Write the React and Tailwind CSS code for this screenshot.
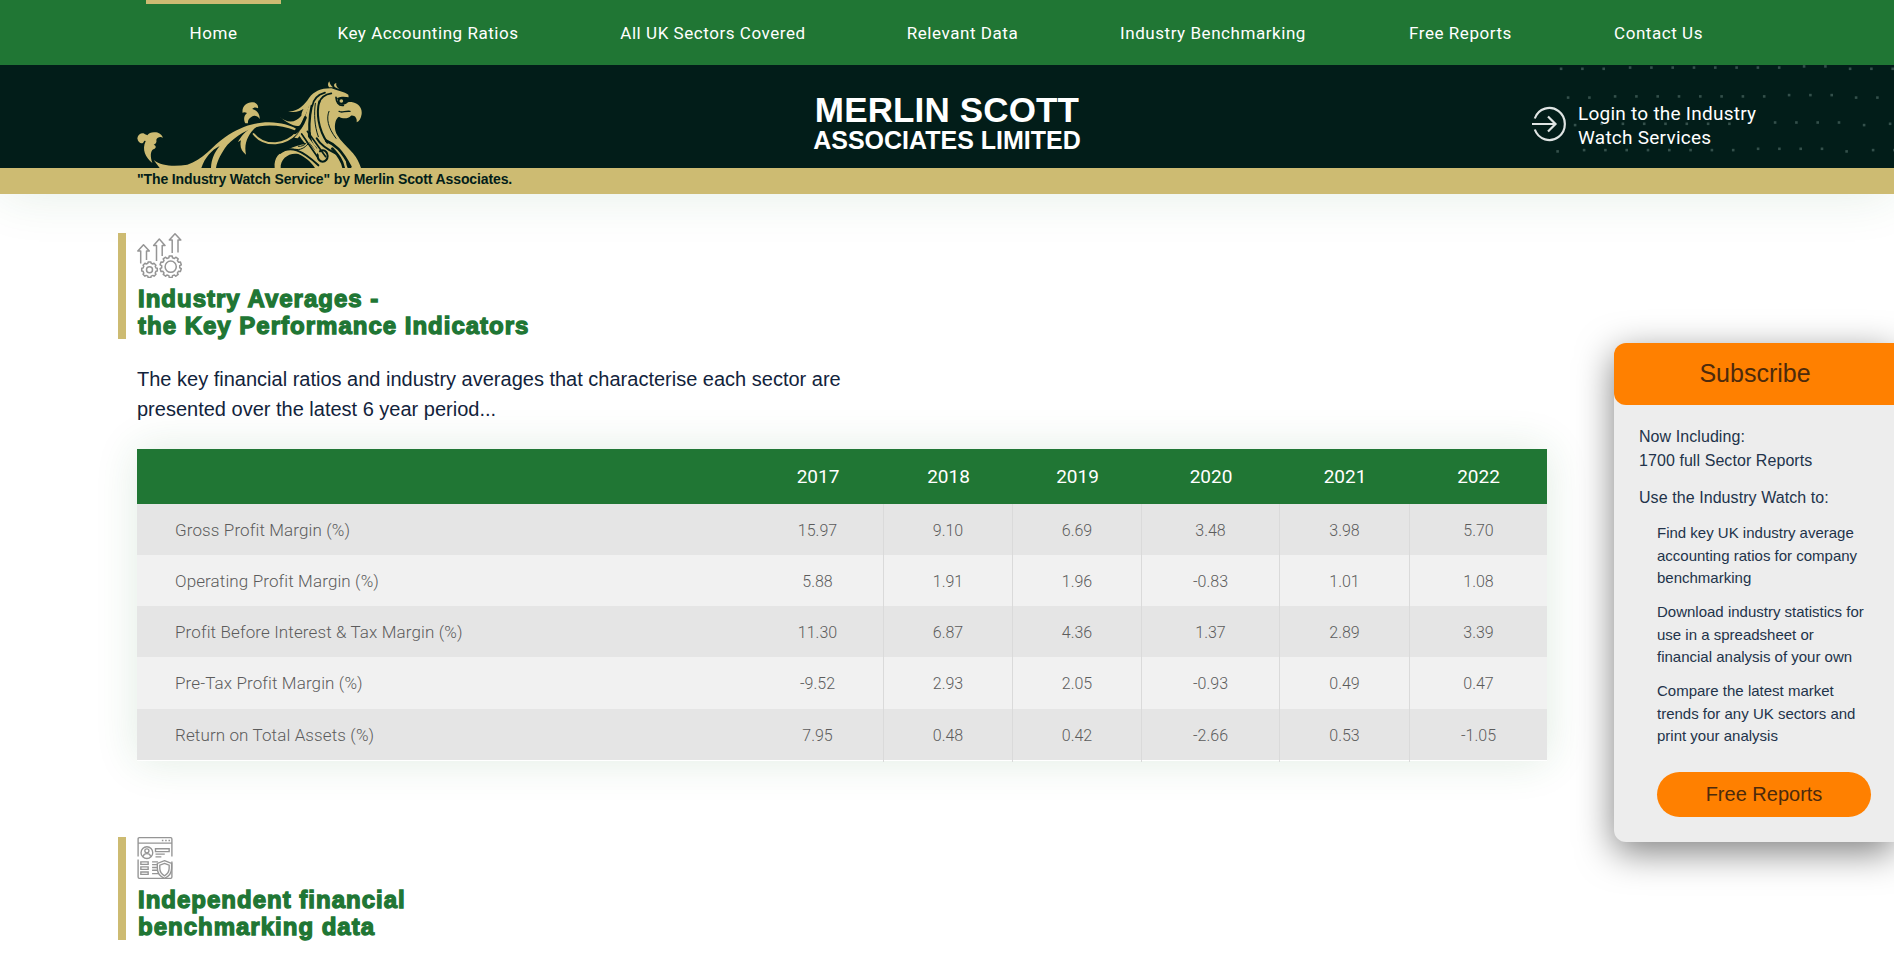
const NAV = [
  { label: "Home", cls: "w-[135px] border-t-4 border-[#cdbb72] leading-[58px]" },
  { label: "Key Accounting Ratios", cls: "w-[272px] leading-[66px]" },
  { label: "All UK Sectors Covered", cls: "w-[276px] leading-[66px]" },
  { label: "Relevant Data", cls: "w-[201px] leading-[66px]" },
  { label: "Industry Benchmarking", cls: "w-[278px] leading-[66px]" },
  { label: "Free Reports", cls: "w-[195px] leading-[66px]" },
  { label: "Contact Us", cls: "w-[179px] leading-[66px]" },
];

const YEARS = ["2017", "2018", "2019", "2020", "2021", "2022"];
const ROWS = [
  ["Gross Profit Margin (%)", "15.97", "9.10", "6.69", "3.48", "3.98", "5.70"],
  ["Operating Profit Margin (%)", "5.88", "1.91", "1.96", "-0.83", "1.01", "1.08"],
  ["Profit Before Interest & Tax Margin (%)", "11.30", "6.87", "4.36", "1.37", "2.89", "3.39"],
  ["Pre-Tax Profit Margin (%)", "-9.52", "2.93", "2.05", "-0.93", "0.49", "0.47"],
  ["Return on Total Assets (%)", "7.95", "0.48", "0.42", "-2.66", "0.53", "-1.05"],
];
const COLS = "grid grid-cols-[615px_132px_129px_129px_138px_130px_137px]";
const ROW_H = ["h-[51px]", "h-[51px]", "h-[51px]", "h-[52px]", "h-[51px]"];

const run = (x0, n, y) => Array.from({ length: n }, (_, i) => [x0 + i * 21.3, y]);
const DOTS = [
  ...run(17, 3, 3.7), ...run(86, 8, 2.5), ...run(260, 2, 1.3), ...run(306, 3, 3.7),
  ...run(24, 2, 32.5), ...run(71, 8, 31.3), ...run(245, 3, 30), ...run(312, 2, 32.5),
  ...run(31, 1, 60), ...run(57.5, 7, 58.7), ...run(231, 4, 57.4), ...run(320, 1, 60), ...run(346, 1, 58.7),
  ...run(13.5, 1, 86.3), ...run(40, 8, 85), ...run(214, 4, 83.7), ...run(302.5, 1, 86.3), ...run(329, 2, 85),
];

function Griffin() {
  return (
    <svg className="block h-[98px] w-[250px]" viewBox="0 0 750 294">
      <g fill="#cdbb72">
        <path d="M82 279C61 262 50 238 62 214C62 211 57 212 56 216C53 224 39 220 37 205C39 192 50 188 58 191C61 193 63 193 67 196C71 190 80 186 90 187C100 187 108 191 114 203C105 199 97 202 94 209C96 216 92 222 86 224C95 228 94 234 85 238C76 243 75 260 82 279Z" />
        <path d="M86 270C110 289 150 290 187 284C232 272 262 228 300 202C340 174 382 157 432 157C470 158 495 166 513 176L509 181C480 169 440 163 405 169C365 176 320 206 300 234C284 258 276 276 273 294L258 294C259 268 268 248 284 228C260 240 240 262 229 294L104 294Z" />
        <path d="M361 160C354 145 358 136 366 129C360 126 355 126 353 129C349 109 366 95 384 97C396 98 401 108 399 115C392 111 386 112 382 117C396 121 405 133 404 147C398 138 388 135 380 140C371 145 368 152 369 160Z" />
        <path d="M384 170C358 184 346 202 339 216L348 211C343 230 350 245 363 254C359 235 361 216 370 200C376 188 384 180 394 170Z" />
        <path d="M460 137C484 159 510 161 529 137C529 118 552 94 560 88C550 114 518 134 487 123C516 128 538 106 552 84C568 63 590 54 620 55C634 62 660 66 670 74L671 82C662 80 650 78 636 84L642 100C648 106 662 106 669 97C676 95 684 97 688 98C704 102 712 118 710 132C708 145 703 154 695 157C697 144 689 135 678 137C668 148 652 146 642 140C632 146 629 160 630 176C632 192 639 196 645 208C660 225 672 236 684 250C696 264 702 278 708 294L679 294C676 282 669 275 663 271C663 281 665 288 668 294L570 294C556 274 542 262 520 252C493 246 465 266 467 294L449 294C446 264 462 246 490 238C505 230 524 224 542 222C532 212 526 204 520 190C542 160 545 132 553 106C544 130 536 150 527 164C516 176 486 158 460 137Z" />
        <path d="M612 52C607 45 609 38 613 34C615 44 618 47 624 52ZM629 51C625 44 628 40 634 39C632 48 637 52 643 58Z" />
        <path d="M508 203C532 180 546 150 551 116L558 120C553 155 540 183 518 205Z" />
      </g>
      <path d="M386 192C402 212 424 221 452 220C500 216 536 178 551 116" fill="none" stroke="#cdbb72" strokeWidth="6" strokeLinecap="round" />
      <g fill="none" stroke="#021d19" strokeWidth="5" strokeLinecap="round" strokeLinejoin="round">
        <path d="M465 249C495 226 530 239 580 286" strokeWidth="6" />
        <path d="M541 143C533 164 524 180 510 188" strokeWidth="9" />
        <path d="M560 108C553 140 550 172 556 214" strokeWidth="7" />
        <path d="M571 100C567 130 568 168 580 200" strokeWidth="3" />
        <path d="M583 94C574 127 578 175 607 218" strokeWidth="6" />
        <path d="M612 124C603 145 609 174 633 205" strokeWidth="3" />
        <path d="M600 68C578 74 566 86 562 108M619 70C594 74 586 87 583 98" strokeWidth="5" />
        <path d="M633 82C634 95 640 108 655 106" strokeWidth="5" />
        <circle cx="649" cy="93" r="8" strokeWidth="5" fill="#cdbb72" />
        <path d="M642 124C649 130 661 122 675 124" strokeWidth="4" />
        <path d="M553 190C552 210 558 224 572 236" strokeWidth="9" />
        <path d="M575 205C588 228 610 240 633 251" strokeWidth="6" />
        <path d="M604 212C630 223 650 241 676 290M622 236C640 256 652 271 656 294" strokeWidth="8" />
        <path d="M530 192L578 262M547 184L602 260" strokeWidth="5" />
        <path d="M512 238C524 242 540 233 548 223M520 229C530 230 538 226 544 219" strokeWidth="3" />
        <ellipse cx="593" cy="258" rx="15" ry="17" strokeWidth="6" />
      </g>
      <path d="M537 190L594 266" stroke="#cdbb72" strokeWidth="7" strokeLinecap="round" />
    </svg>
  );
}

function gear(cx, cy, r, teeth) {
  const pts = [];
  for (let i = 0; i < teeth; i++) {
    const a = (i / teeth) * Math.PI * 2 + Math.PI / 2;
    const s = (Math.PI * 2) / teeth;
    [[-0.32, 0.84], [-0.22, 1], [0.22, 1], [0.32, 0.84]].forEach(([o, k]) =>
      pts.push(`${(cx + Math.cos(a + o * s) * r * k).toFixed(2)} ${(cy + Math.sin(a + o * s) * r * k).toFixed(2)}`)
    );
  }
  return `M${pts.join("L")}Z`;
}

function GrowthIcon() {
  return (
    <svg className="block h-[45px] w-[45px]" viewBox="0 0 45 45" fill="none" stroke="#959595" strokeWidth="1.5" strokeLinejoin="round">
      <path d="M3.7 30.5V18H.8L6.5 11.8L12.3 18H9.5V27M19.5 28V12.5H16.6L22.3 6L28 12.5H25.2V23M35.2 20V7H32.3L38 .8L43.8 7H41V19.5" />
      <path d={gear(12.5, 36.7, 7.9, 8)} />
      <circle cx="12.5" cy="36.7" r="3" />
      <path d={gear(33.7, 33.7, 10.8, 10)} />
      <circle cx="33.7" cy="33.7" r="5.6" />
    </svg>
  );
}

function DataIcon() {
  return (
    <svg className="block h-[43px] w-[36px]" viewBox="0 0 36 43" fill="none" stroke="#959595" strokeWidth="1.4">
      <path d="M.7 20V2Q.7.7 2 .7H34Q35.3.7 35.3 2V20M.7 23V41Q.7 42.3 2 42.3H34Q35.3 42.3 35.3 41V25M.7 6.3H35.3" />
      <path d="M25 3.6h1.6M28.4 3.6H30M31.8 3.6h1.6" strokeWidth="1.6" />
      <circle cx="9.7" cy="16" r="6" />
      <circle cx="9.7" cy="14.2" r="2.1" />
      <path d="M5.8 20C6.3 17.6 8 17 9.7 17S13.1 17.6 13.6 20" />
      <path d="M18.5 12H32.5V15H18.5ZM18.5 17.5H28M18.5 20.3H24.5" />
      <path d="M3.5 25.5H11V28H3.5ZM3.5 30.6H11V33.2H3.5ZM3.5 35.8H11V38.3H3.5ZM15 25.5H21M15 28.3H20M15 31.2H20M15 34H20.5M15 37.5H22" />
      <path d="M27.7 24.2L35 27V32C35 37 32 40.5 27.7 42.3C23.4 40.5 20.4 37 20.4 32V27Z" fill="#fff" />
      <path d="M27.7 27L32.5 28.8V32C32.5 35.8 30.5 38.2 27.7 39.7C24.9 38.2 22.9 35.8 22.9 32V28.8Z" />
    </svg>
  );
}

function SectionHeading({ icon, lines, cls }) {
  return (
    <div className={`flex w-[460px] flex-col border-l-8 border-[#cdbb72] pl-[11px] ${cls}`}>
      {icon}
      <h2 className="mt-[7px] pl-px text-[24px] leading-[27px] font-bold tracking-[1px] whitespace-nowrap text-[#207634] [-webkit-text-stroke:1.3px_#207634]">
        {lines[0]}
        <br />
        {lines[1]}
      </h2>
    </div>
  );
}

export default function App() {
  return (
    <div className="relative h-[967px] overflow-hidden bg-white font-['Liberation_Sans',Arial,sans-serif] text-[#12233b]">
      <header className="shadow-[0_0_50px_rgba(32,118,52,0.12)]">
        <nav className="flex h-[65px] gap-[11px] bg-[#207634] pl-[146px] font-[Roboto,sans-serif] text-[17px] tracking-[0.55px] text-white">
          {NAV.map((n) => (
            <a key={n.label} className={`flex justify-center whitespace-nowrap ${n.cls}`}>
              {n.label}
            </a>
          ))}
        </nav>
        <div className="relative flex h-[103px] bg-[#021d19]">
          <svg className="absolute top-0 right-0 h-[103px] w-[350px]" viewBox="0 0 350 103">
            {DOTS.map(([x, y], i) => (
              <rect key={i} x={x - 1.2} y={y - 1.2} width="2.6" height="2.6" fill="#34504b" />
            ))}
          </svg>
          <div className="w-[647px] pt-[5px] pl-[125px]">
            <Griffin />
          </div>
          <div className="w-[600px] pt-[25px] text-center font-bold text-white">
            <div className="text-[35px] leading-[39px] tracking-[0.15px]">MERLIN SCOTT</div>
            <div className="text-[25px] leading-[23px]">ASSOCIATES LIMITED</div>
          </div>
          <a className="relative flex pt-[37px] pl-[285px] font-[Roboto,sans-serif] text-[19px] leading-[24px] tracking-[0.25px] text-white">
            <svg className="mt-1 h-9 w-[35px]" viewBox="0 0 35 36" fill="none" stroke="#dfe4e3" strokeWidth="2.2">
              <path d="M2.8 12.5A15.5 16 0 1 1 2.8 23.5M0 18H23M16 10.5L23.5 18L16 25.5" />
            </svg>
            <span className="ml-[11px] whitespace-nowrap">
              Login to the Industry
              <br />
              Watch Services
            </span>
          </a>
        </div>
        <div className="h-[26px] bg-[#cdbb72] pl-[137px] text-[14px] leading-[23px] font-bold tracking-[-0.12px] text-[#021d19]">
          "The Industry Watch Service" by Merlin Scott Associates.
        </div>
      </header>

      <main className="pt-[39px] pl-[118px]">
        <SectionHeading icon={<GrowthIcon />} lines={["Industry Averages -", "the Key Performance Indicators"]} cls="h-[106px]" />
        <p className="mt-[25px] pl-[19px] text-[20px] leading-[30px]">
          The key financial ratios and industry averages that characterise each sector are
          <br />
          presented over the latest 6 year period...
        </p>
        <div className="mt-[25px] ml-[19px] w-[1410px] bg-white font-[Roboto,sans-serif] shadow-[0_0_40px_rgba(32,118,52,0.14)]">
          <div className={`${COLS} h-[55px] bg-[#207634] text-center text-[19px] leading-[56px] text-white`}>
            <span />
            {YEARS.map((y) => (
              <span key={y}>{y}</span>
            ))}
          </div>
          {ROWS.map((r, i) => (
            <div key={r[0]} className={`${COLS} ${ROW_H[i]} text-center text-[16px] leading-[53px] font-light text-[#5c5c5c] ${i % 2 ? "bg-[#f1f1f1]" : "bg-[#e5e5e5]"}`}>
              <span className="pl-[38px] text-left text-[17px] tracking-[0.12px]">{r[0]}</span>
              {r.slice(1).map((v, j) => (
                <span key={j} className={j < 5 ? "border-r border-[#dadada]" : ""}>
                  {v}
                </span>
              ))}
            </div>
          ))}
          <div className="h-px" />
        </div>
        <div className="h-[76px]" />
        <SectionHeading icon={<DataIcon />} lines={["Independent financial", "benchmarking data"]} cls="h-[103px]" />
      </main>

      <aside className="absolute top-[343px] right-0 h-[499px] w-[280px] rounded-l-xl bg-[#ededed] shadow-[0_10px_36px_rgba(0,0,0,0.5)]">
        <div className="h-[62px] rounded-l-xl bg-[#ff8000] pl-[2px] text-center text-[25px] leading-[61px] text-[#4d2a0c]">Subscribe</div>
        <div className="pt-5 pl-[25px] text-[16px] leading-6 tracking-[0.07px] text-[#22334a]">
          <p>
            Now Including:
            <br />
            1700 full Sector Reports
          </p>
          <p className="mt-[13px]">Use the Industry Watch to:</p>
          <ul className="mt-3 flex flex-col gap-[11.5px] pl-[18px] text-[15px] leading-[22.5px] tracking-normal whitespace-nowrap">
            <li>Find key UK industry average<br />accounting ratios for company<br />benchmarking</li>
            <li>Download industry statistics for<br />use in a spreadsheet or<br />financial analysis of your own</li>
            <li>Compare the latest market<br />trends for any UK sectors and<br />print your analysis</li>
          </ul>
        </div>
        <button className="mt-6 ml-[43px] block h-[45px] w-[214px] rounded-full bg-[#ff8000] text-[20px] text-[#4d2a0c]">Free Reports</button>
      </aside>
    </div>
  );
}
